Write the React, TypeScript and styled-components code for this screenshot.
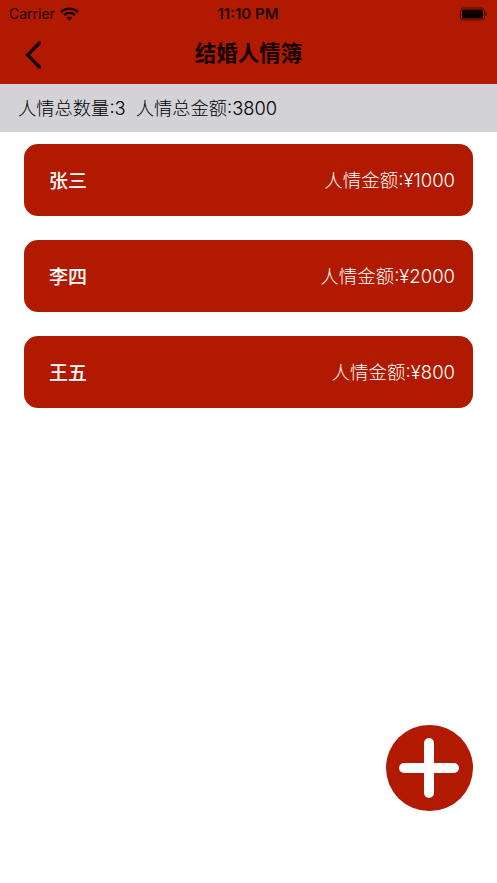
import React from 'react';
import styled, { createGlobalStyle } from 'styled-components';

const RED = '#b11a00';
const FONT = '"Inter", "Noto Sans CJK SC", sans-serif';

const GlobalStyle = createGlobalStyle`
  html, body {
    margin: 0;
    padding: 0;
    background: #fff;
  }
`;

const Page = styled.div`
  position: relative;
  width: 497px;
  height: 883px;
  overflow: hidden;
  background: #fff;
  font-family: ${FONT};
`;

const Header = styled.header`
  height: 84px;
  background: ${RED};
  display: flex;
  flex-direction: column;
`;

const StatusBar = styled.div`
  height: 27px;
  padding: 0 10px 0 9px;
  display: grid;
  grid-template-columns: 1fr auto 1fr;
  align-items: center;
  color: #1c0500;
  font-size: 14px;
`;

const Carrier = styled.div`
  display: flex;
  align-items: center;
  gap: 5px;
`;

const Time = styled.div`
  font-weight: 600;
  font-size: 15px;
`;

const Battery = styled.div`
  justify-self: end;
  display: flex;
`;

const NavBar = styled.div`
  position: relative;
  flex: 1;
  padding-bottom: 8px;
  display: flex;
  align-items: center;
  justify-content: center;
`;

const BackButton = styled.button`
  position: absolute;
  left: 24px;
  top: 13px;
  padding: 0;
  border: 0;
  background: none;
  display: flex;
`;

const Title = styled.h1`
  margin: 0;
  font-size: 21.5px;
  font-weight: 700;
  color: #120200;
`;

const Summary = styled.div`
  height: 48px;
  padding: 0 18px 2px;
  box-sizing: border-box;
  background: #d2d2d7;
  display: flex;
  align-items: center;
  gap: 10px;
  font-size: 18.3px;
  font-weight: 300;
  color: #000;
`;

const List = styled.div`
  padding: 12px 24px;
  display: flex;
  flex-direction: column;
  gap: 24px;
`;

const Card = styled.div`
  height: 72px;
  padding: 0 18px 2px 25px;
  box-sizing: border-box;
  border-radius: 14px;
  background: ${RED};
  color: #fff;
  display: flex;
  align-items: center;
  justify-content: space-between;
`;

const Name = styled.span`
  font-size: 19px;
  font-weight: 500;
`;

const Amount = styled.span`
  font-size: 18.5px;
  font-weight: 300;
`;

const AddButton = styled.button`
  position: absolute;
  left: 386px;
  top: 724.5px;
  width: 86.5px;
  height: 86.5px;
  padding: 0;
  border: 0;
  border-radius: 50%;
  background: ${RED};
  display: flex;
  align-items: center;
  justify-content: center;
`;

const people = [
  { name: '张三', amount: 1000 },
  { name: '李四', amount: 2000 },
  { name: '王五', amount: 800 },
];

export default function App(): JSX.Element {
  return (
    <Page>
      <GlobalStyle />
      <Header>
        <StatusBar>
          <Carrier>
            <span>Carrier</span>
            <svg width="19" height="14" viewBox="0 0 19 14" fill="none" stroke="#1c0500" strokeWidth="2.4">
              <path d="M1 5 C6 0.5 13 0.5 18 5" />
              <path d="M4 8 C7.2 5.2 11.8 5.2 15 8" />
              <path d="M9.5 13.5 L6.6 10.6 C8.4 9.2 10.6 9.2 12.4 10.6 Z" fill="#1c0500" stroke="none" />
            </svg>
          </Carrier>
          <Time>11:10 PM</Time>
          <Battery>
            <svg width="27" height="14" viewBox="0 0 27 14">
              <rect x="0.5" y="1" width="24" height="12" rx="3" fill="none" stroke="#4a0b00" />
              <rect x="2" y="2.5" width="21" height="9" rx="1.5" fill="#0c0100" />
              <rect x="25.5" y="5" width="1.2" height="4" rx="0.6" fill="#4a0b00" />
            </svg>
          </Battery>
        </StatusBar>
        <NavBar>
          <BackButton aria-label="back">
            <svg width="18" height="30" viewBox="0 0 18 30" fill="none" stroke="#120200" strokeWidth="3.2" strokeLinecap="round">
              <path d="M15.5 3 L3.5 15 L15.5 27" />
            </svg>
          </BackButton>
          <Title>结婚人情簿</Title>
        </NavBar>
      </Header>
      <Summary>
        <span>人情总数量:3</span>
        <span>人情总金额:3800</span>
      </Summary>
      <List>
        {people.map(p => (
          <Card key={p.name}>
            <Name>{p.name}</Name>
            <Amount>人情金额:¥{p.amount}</Amount>
          </Card>
        ))}
      </List>
      <AddButton aria-label="add">
        <svg width="60" height="60" viewBox="0 0 60 60" stroke="#fff" strokeWidth="10" strokeLinecap="round">
          <path d="M30 5 V55 M5 30 H55" />
        </svg>
      </AddButton>
    </Page>
  );
}
